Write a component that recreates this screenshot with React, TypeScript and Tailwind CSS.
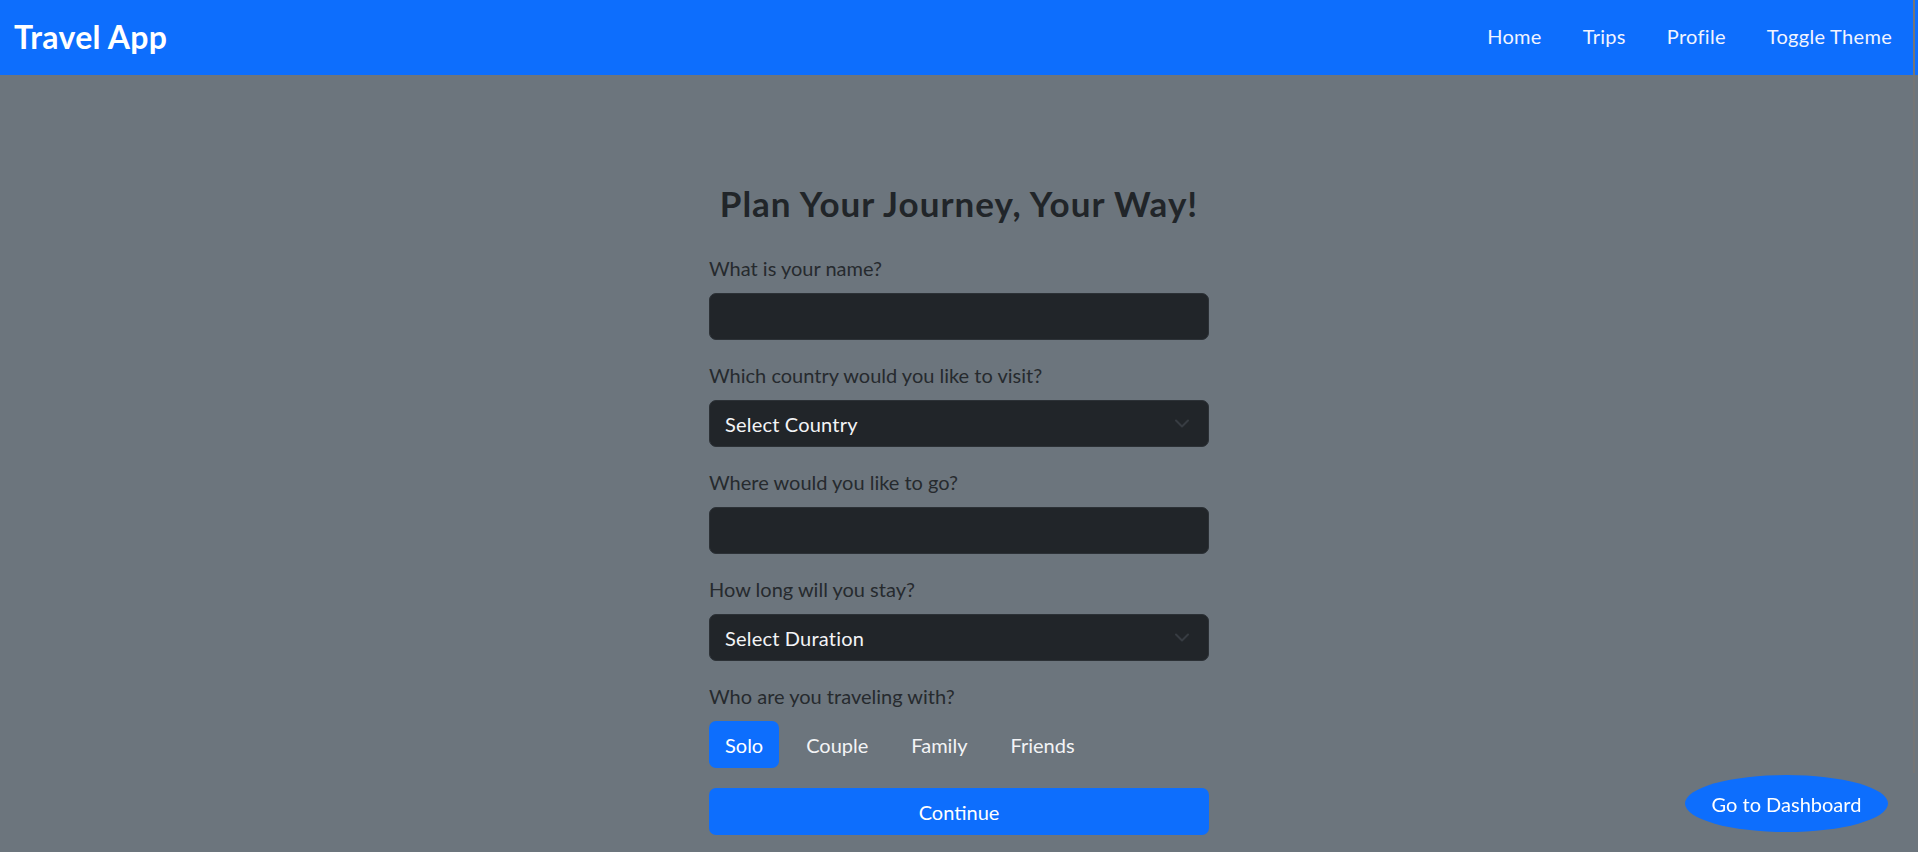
import React from "react";

function Chevron() {
  return (
    <svg width="14" height="9" viewBox="0 0 14 9" fill="none">
      <polyline points="1,1.5 7,7.5 13,1.5" stroke="#373c42" strokeWidth="2" strokeLinecap="round" strokeLinejoin="round" />
    </svg>
  );
}

function Label({ children }: { children: React.ReactNode }) {
  return <label className="block leading-[30px] mb-[10px] text-[#262a2e]">{children}</label>;
}

function TextInput() {
  return <div className="h-[47px] w-full rounded-[7px] bg-[#212529] border border-[#2c3136] mb-[20px]" />;
}

function Select({ text }: { text: string }) {
  return (
    <div className="h-[47px] w-full rounded-[7px] bg-[#212529] border border-[#2c3136] mb-[20px] flex items-center justify-between pl-[15px] pr-[19px] text-[#f3f4f6]">
      <span className="tracking-[0.2px]">{text}</span>
      <Chevron />
    </div>
  );
}

export default function App() {
  const pills = ["Solo", "Couple", "Family", "Friends"];
  return (
    <div className="h-screen overflow-hidden bg-[#6c757d] font-['Lato','Open_Sans',sans-serif] text-[20px] leading-[1.5] text-[#212529] relative">
      <nav className="h-[75px] bg-[#0d6efd] flex items-center justify-between pl-[14px] pr-[26px]">
        <span className="text-[32px] font-bold text-white leading-none tracking-[0.3px] pb-[2px]">Travel App</span>
        <div className="flex gap-[41px] text-[#f1f4ff] tracking-[0.3px] pb-[4px]">
          <span>Home</span>
          <span>Trips</span>
          <span>Profile</span>
          <span>Toggle Theme</span>
        </div>
      </nav>
      <main className="w-[500px] mx-auto pt-[108px]">
        <h2 className="text-[35px] font-bold text-center leading-[40px] mb-[30px] text-[#212529] tracking-[1px]">
          Plan Your Journey, Your Way!
        </h2>
        <Label>What is your name?</Label>
        <TextInput />
        <Label>Which country would you like to visit?</Label>
        <Select text="Select Country" />
        <Label>Where would you like to go?</Label>
        <TextInput />
        <Label>How long will you stay?</Label>
        <Select text="Select Duration" />
        <Label>Who are you traveling with?</Label>
        <div className="flex gap-[11px] mb-[20px]">
          {pills.map((p, i) => (
            <div
              key={p}
              className={
                i === 0
                  ? "h-[47px] px-[16px] flex items-center rounded-[7px] bg-[#0d6efd] text-white"
                  : "h-[47px] px-[16px] flex items-center rounded-[7px] text-[#f3f4f6]"
              }
            >
              {p}
            </div>
          ))}
        </div>
        <button className="w-full h-[47px] rounded-[7px] bg-[#0d6efd] text-white text-center">Continue</button>
      </main>
      <button className="fixed right-[30px] bottom-[20px] w-[203px] h-[57px] rounded-[50%] bg-[#0d6efd] text-white text-[20px]">
        Go to Dashboard
      </button>
      <div className="fixed top-0 right-[3px] w-[2px] h-[773px] bg-[#757575]" />
    </div>
  );
}
